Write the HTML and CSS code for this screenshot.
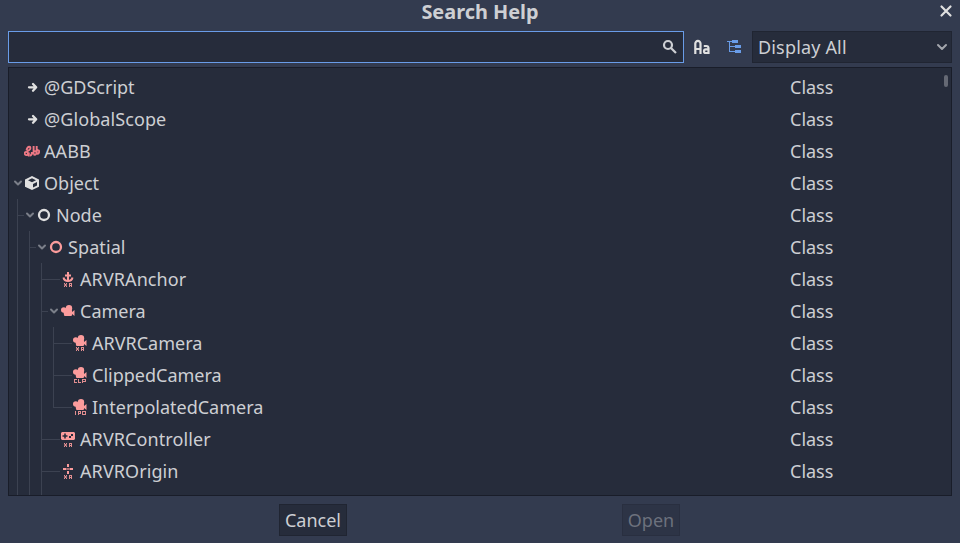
FILE: index.html
```html
<!DOCTYPE html>
<html lang="en">
<head>
<meta charset="utf-8">
<title>Search Help</title>
<link rel="stylesheet" href="styles.css">
</head>
<body>
<svg class="defs" width="0" height="0" aria-hidden="true">
  <symbol id="arrow" viewBox="0 0 16 16"><path d="M5 8.300h7M9 5 12.200 8.300 9 11.700" fill="none" stroke="currentColor" stroke-width="2.300" stroke-linecap="round" stroke-linejoin="round"/></symbol>
  <symbol id="fold" viewBox="0 0 12 12"><path d="M3 4.500 6 7.500 9 4.500" fill="none" stroke="currentColor" stroke-width="2" stroke-linecap="round" stroke-linejoin="round"/></symbol>
  <symbol id="aabb" viewBox="0 0 16 16"><g fill="none" stroke="currentColor" stroke-width="1.900"><circle cx="2.300" cy="10.500" r="1.600"/><path d="M4.800 13.500V9.500M2.500 7.500C3 4.500 4 3.700 5.300 3.700c1.500 0 1.500 2.300 0 3.300L3 8.500M6 12.500c1.600 0 1.900-1.500 1.900-3.500M9.600 3v8.500M9.600 8.500c2-1 3 0 2.700 1.700-.3 1.500-1.500 2-2.700 1.300M12.700 3v8.500M12.700 7.500c2-.8 2.700.3 2.400 1.700-.3 1.500-1.400 1.800-2.400 1.300"/></g></symbol>
  <symbol id="object" viewBox="0 0 16 16"><path fill-rule="evenodd" fill="currentColor" d="M8 1 1 4.400v7.300L8 15l7-3.300V4.400zM8 3.200l4 2-4 2-4-2zM9 9l4-2v3.500l-4 2z"/></symbol>
  <symbol id="ring" viewBox="0 0 16 16"><circle cx="8" cy="8" r="5" fill="none" stroke="currentColor" stroke-width="2.300"/></symbol>
  <symbol id="xr" viewBox="0 0 16 16"><path opacity=".88" fill="currentColor" d="M4 12h1v1h1v-1h1v1L6.300 14 7 15v1H6v-1H5v1H4v-1l.7-1L4 13zM9 12h3v4h-1v-1h-1v1H9zm1 1v1h1v-1z" fill-rule="evenodd"/></symbol>
  <symbol id="anchor" viewBox="0 0 16 16"><path fill="none" stroke="currentColor" stroke-width="2" d="M8 1v9M5 4.500h6M3.500 6.500c.5 2.300 2 3.500 4.500 3.500s4-1.200 4.500-3.500"/><use href="#xr"/></symbol>
  <symbol id="cambody" viewBox="0 0 16 16"><g fill="currentColor"><circle cx="9" cy="3.200" r="3.200"/><circle cx="3.800" cy="5" r="2.800"/><path d="M3 3.500h8.500l.5 2.500v1L14.500 5v6L12 9v1a1 1 0 0 1-1 1H5a1 1 0 0 1-1-1z"/></g></symbol>
  <symbol id="camera" viewBox="0 0 16 16"><use href="#cambody" y="2" width="16" height="16"/></symbol>
  <symbol id="xrcam" viewBox="0 0 16 16"><use href="#cambody"/><use href="#xr"/></symbol>
  <symbol id="clpcam" viewBox="0 0 16 16"><use href="#cambody"/><path opacity=".88" fill="currentColor" fill-rule="evenodd" d="M2 12h3v1H3v2h2v1H2zM6 12h1v3h2v1H6zM10 12h4v3h-3v1h-1zm1 1v1h2v-1z"/></symbol>
  <symbol id="ipocam" viewBox="0 0 16 16"><use href="#cambody"/><path opacity=".88" fill="currentColor" fill-rule="evenodd" d="M3 12h1v4H3zM6 12h3v3H7v1H6zm1 1v1h1v-1zM10 12h4v4h-4zm1 1v2h2v-2z"/></symbol>
  <symbol id="controller" viewBox="0 0 16 16"><path fill="currentColor" fill-rule="evenodd" d="M2 1h12l1 1v6l-1 1H2L1 8V2zM4.200 2.500v1.800H2.500v1.500h1.700v1.700h1.600V5.800h1.700V4.300H5.800V2.500zM11 3v2h2V3zM9 5v2h2V5z"/><use href="#xr"/></symbol>
  <symbol id="origin" viewBox="0 0 16 16"><path fill="currentColor" d="M7 1h2v3H7zM7 8h2v3H7zM3 5h3.500v2H3zM9.500 5H13v2H9.500z"/><path fill="currentColor" opacity=".6" d="M7 5h2v2H7z"/><use href="#xr"/></symbol>
</svg>
<main class="dialog">
  <header class="titlebar">
    <h1>Search Help</h1>
    <svg class="close" viewBox="0 0 16 16"><path d="m3.500 3.500 9 9m0-9-9 9" fill="none" stroke="currentColor" stroke-width="2.200" stroke-linecap="round"/></svg>
  </header>
  <section class="tools">
    <div class="search"><svg class="icon" viewBox="0 0 16 16"><g fill="none" stroke="currentColor" stroke-width="2.200"><circle cx="6" cy="6" r="4"/><path d="m9 9 5 5"/></g></svg></div>
    <svg class="icon case" viewBox="0 0 16 16"><path fill="none" stroke="currentColor" stroke-width="2.200" d="M1.300 15V4.500a2.600 2.600 0 0 1 5.200 0V15M1.300 10h5.200M9.800 7h2.400a2.300 2.300 0 0 1 2.300 2.300V14h-2.700a1.800 1.800 0 0 1 0-3.600h2.700"/></svg>
    <svg class="icon hierarchy" viewBox="0 0 16 16"><path fill="currentColor" d="M6 1h6v3H6V3H4v4h5V6h6v3H9V8H4v4h5v-1h6v3H9v-1H3V3H1V2h5z"/></svg>
    <div class="select"><span>Display All</span><svg viewBox="0 0 16 16"><path d="m4 6 4 4 4-4" fill="none" stroke="currentColor" stroke-width="2" stroke-linecap="round" stroke-linejoin="round"/></svg></div>
  </section>
  <section class="tree">
    <div class="rows">
      <div class="row"><i class="slot"></i><svg class="icon"><use href="#arrow"/></svg><span class="name">@GDScript</span><span class="kind">Class</span></div>
      <div class="row"><i class="slot"></i><svg class="icon"><use href="#arrow"/></svg><span class="name wide">@GlobalScope</span><span class="kind">Class</span></div>
      <div class="row"><i class="slot"></i><svg class="icon math"><use href="#aabb"/></svg><span class="name wide">AABB</span><span class="kind">Class</span></div>
      <div class="row"><svg class="fold"><use href="#fold"/></svg><svg class="icon"><use href="#object"/></svg><span class="name">Object</span><span class="kind">Class</span></div>
      <div class="row"><i class="slot line branch"></i><svg class="fold"><use href="#fold"/></svg><svg class="icon"><use href="#ring"/></svg><span class="name">Node</span><span class="kind">Class</span></div>
      <div class="row"><i class="slot line"></i><i class="slot line branch"></i><svg class="fold"><use href="#fold"/></svg><svg class="icon pink"><use href="#ring"/></svg><span class="name wide">Spatial</span><span class="kind">Class</span></div>
      <div class="row"><i class="slot line"></i><i class="slot line"></i><i class="slot line branch"></i><i class="slot leaf"></i><svg class="icon pink"><use href="#anchor"/></svg><span class="name wide">ARVRAnchor</span><span class="kind">Class</span></div>
      <div class="row"><i class="slot line"></i><i class="slot line"></i><i class="slot line branch"></i><svg class="fold"><use href="#fold"/></svg><svg class="icon pink"><use href="#camera"/></svg><span class="name">Camera</span><span class="kind">Class</span></div>
      <div class="row"><i class="slot line"></i><i class="slot line"></i><i class="slot line"></i><i class="slot line branch"></i><i class="slot leaf"></i><svg class="icon pink"><use href="#xrcam"/></svg><span class="name">ARVRCamera</span><span class="kind">Class</span></div>
      <div class="row"><i class="slot line"></i><i class="slot line"></i><i class="slot line"></i><i class="slot line branch"></i><i class="slot leaf"></i><svg class="icon pink"><use href="#clpcam"/></svg><span class="name">ClippedCamera</span><span class="kind">Class</span></div>
      <div class="row"><i class="slot line"></i><i class="slot line"></i><i class="slot line"></i><i class="slot line branch last"></i><i class="slot leaf"></i><svg class="icon pink"><use href="#ipocam"/></svg><span class="name">InterpolatedCamera</span><span class="kind">Class</span></div>
      <div class="row"><i class="slot line"></i><i class="slot line"></i><i class="slot line branch"></i><i class="slot leaf"></i><svg class="icon pink"><use href="#controller"/></svg><span class="name wide">ARVRController</span><span class="kind">Class</span></div>
      <div class="row"><i class="slot line"></i><i class="slot line"></i><i class="slot line branch"></i><i class="slot leaf"></i><svg class="icon pink"><use href="#origin"/></svg><span class="name wide">ARVROrigin</span><span class="kind">Class</span></div>
      <div class="row"><i class="slot line"></i><i class="slot line"></i><i class="slot line"></i></div>
    </div>
    <div class="scroll"><div class="thumb"></div></div>
  </section>
  <footer class="actions">
    <button class="button cancel">Cancel</button>
    <button class="button open" disabled>Open</button>
  </footer>
</main>
</body>
</html>
```
FILE: styles.css
```css
* { box-sizing: border-box; }
body {
  margin: 0;
  background: #333b4f;
  color: #cdcfd3;
  font: 18px/32px "Noto Sans", sans-serif;
  overflow: hidden;
}
.defs { display: none; }
.dialog {
  width: 960px;
  height: 543px;
  padding: 0 8px;
  display: flex;
  flex-direction: column;
}
.titlebar {
  height: 31px;
  display: grid;
  grid-template-columns: 20px 1fr 20px;
  margin-right: -4px;
  margin-left: -4px;
}
.titlebar h1 {
  grid-column: 2;
  margin: 0;
  font-size: 19.9px;
  line-height: 24px;
  font-weight: 700;
  text-align: center;
}
.close { width: 16px; height: 16px; margin: 3px 0 0 2px; color: #e0e0e0; }
.tools { height: 32px; display: flex; align-items: center; }
.search {
  width: 676px;
  height: 32px;
  border: 1px solid #699ce8;
  background: #262c3b;
  display: flex;
  align-items: center;
  justify-content: flex-end;
  padding-right: 5px;
}
.icon { width: 16px; height: 16px; flex: none; color: #e0e0e0; }
.search .icon { color: #cdcfd3; }
.case { margin-left: 10px; }
.hierarchy { margin-left: 16px; color: #699ce8; }
.select {
  margin-left: 10px;
  flex: 1;
  height: 32px;
  line-height: 30px;
  padding: 0 1px 0 5px;
  border: 1px solid #202532;
  background: #262c3b;
  display: flex;
  align-items: center;
  justify-content: space-between;
  letter-spacing: 0.17px;
}
.select svg { width: 16px; height: 16px; color: #a3a6ad; }
.tree {
  margin-top: 4px;
  height: 429px;
  border: 1px solid #191d29;
  background: #262c3b;
  display: flex;
  overflow: hidden;
}
.rows { flex: 1; padding: 3px 0 0 3px; }
.row { height: 32px; display: flex; align-items: center; }
.slot { width: 12px; height: 32px; flex: none; }
.line {
  background: linear-gradient(#3c4251, #3c4251) 5px 0 / 1px 100% no-repeat;
}
.branch {
  background:
    linear-gradient(#3c4251, #3c4251) 5px 0 / 1px 100% no-repeat,
    linear-gradient(#3c4251, #3c4251) 5px 16px / 7px 1px no-repeat;
}
.last { background-size: 1px 17px, 7px 1px; }
.leaf { background: linear-gradient(#3c4251, #3c4251) 0 16px / 12px 1px no-repeat; }
.fold { width: 12px; height: 12px; flex: none; color: #7b7f89; }
.pink { color: #fc9c9c; }
.math { color: #ee7985; }
.name { margin-left: 4px; flex: 1; }
.wide { letter-spacing: 0.09px; }
.kind { width: 153px; }
.scroll { width: 8px; padding-top: 7px; }
.thumb { width: 4px; height: 12px; border-radius: 2px; background: #656974; margin-left: 1px; }
.actions { margin-top: 8px; display: flex; padding-left: 271px; gap: 275px; }
.button {
  height: 32px;
  padding: 0;
  border: 1px solid #202532;
  background: #262c3b;
  color: inherit;
  font: 18px/30px "Noto Sans", sans-serif;
}
.cancel { width: 68px; }
.open { width: 58px; }
.button:disabled { border-color: #292f40; background: #2d3446; color: #6c717d; }
```
